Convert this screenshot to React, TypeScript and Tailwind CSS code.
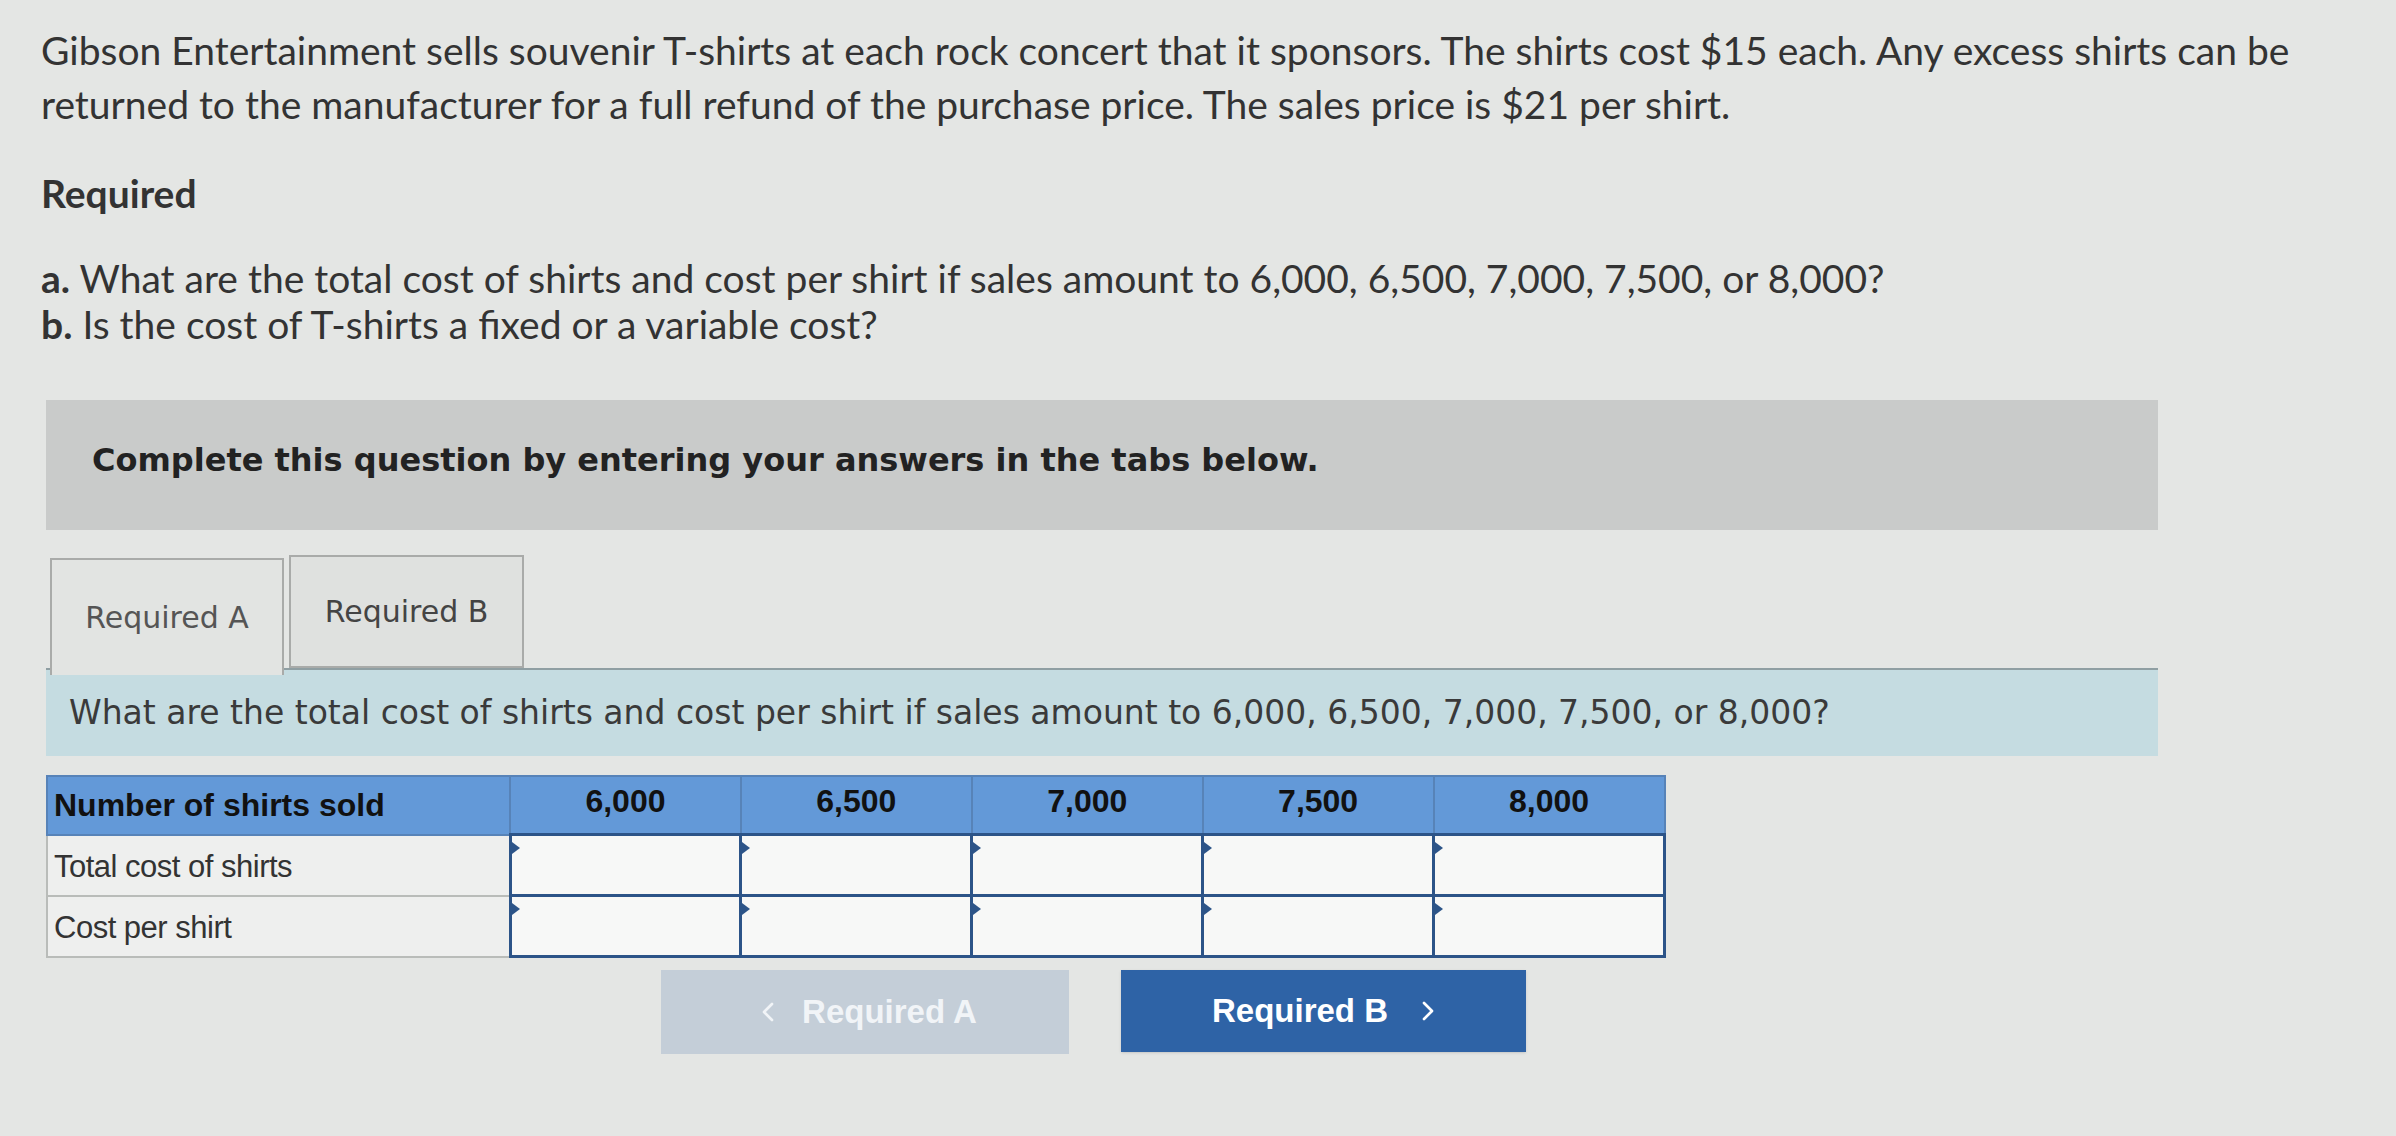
import React from 'react';
import { ChevronLeft, ChevronRight } from 'lucide-react';

const COUNTS = ['6,000', '6,500', '7,000', '7,500', '8,000'];
const ROWS = ['Total cost of shirts', 'Cost per shirt'];

const InputCell = () => (
  <td className="relative border-[3px] border-[#2c5488] bg-[#f7f8f7] p-0">
    <span className="absolute left-0 top-[6px] h-0 w-0 border-y-[6px] border-l-[8px] border-y-transparent border-l-[#2c5488]" />
    <div className="h-[58px]" />
  </td>
);

const App: React.FC = () => {
  return (
    <div className="min-h-[1136px] w-full bg-[#e4e6e4] pl-[41px] pt-[23px] text-[#333] [font-family:Lato,'Open_Sans',sans-serif]">
      <p className="w-[2330px] text-[39px] leading-[54px]">
        Gibson Entertainment sells souvenir T-shirts at each rock concert that it sponsors. The shirts cost $15 each. Any excess shirts can be returned to the manufacturer for a full refund of the purchase price. The sales price is $21 per shirt.
      </p>

      <h2 className="mt-[35px] text-[39px] font-bold leading-[54px]">Required</h2>

      <div className="mt-[35px] text-[39px] leading-[46px]">
        <p>
          <span className="font-bold">a.</span> What are the total cost of shirts and cost per shirt if sales amount to 6,000, 6,500, 7,000, 7,500, or 8,000?
        </p>
        <p>
          <span className="font-bold">b.</span> Is the cost of T-shirts a fixed or a variable cost?
        </p>
      </div>

      <div className="ml-[5px] w-[2112px] [font-family:'DejaVu_Sans',Verdana,sans-serif]">
        <div className="mt-[53px] h-[130px] bg-[#c9cbca] pl-[46px] pt-[36px]">
          <p className="text-[32px] font-bold text-[#222]">Complete this question by entering your answers in the tabs below.</p>
        </div>

        <div className="mt-[25px] flex items-end pl-[4px]">
          <div className="relative z-10 -mb-[7px] flex h-[117px] w-[234px] items-center justify-center border-2 border-b-0 border-[#a9aba9] bg-[#e2e4e2] text-[30px] text-[#555]">
            Required A
          </div>
          <div className="ml-[5px] flex h-[113px] w-[235px] items-center justify-center border-2 border-[#a9aba9] bg-[#dfe1df] text-[30px] text-[#444]">
            Required B
          </div>
        </div>

        <div className="flex h-[88px] items-center border-t-2 border-[#8f9fa3] bg-[#c5dce1] pl-[23px]">
          <p className="text-[33px] text-[#3a3a3a]">
            What are the total cost of shirts and cost per shirt if sales amount to 6,000, 6,500, 7,000, 7,500, or 8,000?
          </p>
        </div>

        <table className="mt-[19px] w-[1620px] border-collapse [font-family:'Liberation_Sans',Arial,sans-serif]">
          <thead>
            <tr className="h-[58px] bg-[#6399d8]">
              <th className="w-[463px] border-2 border-[#5783b8] pl-[6px] text-left text-[32px] font-bold text-[#111]">
                Number of shirts sold
              </th>
              {COUNTS.map(c => (
                <th key={c} className="border-2 border-[#5783b8] pb-[8px] text-center text-[32px] font-bold text-[#111]">
                  {c}
                </th>
              ))}
            </tr>
          </thead>
          <tbody>
            {ROWS.map(r => (
              <tr key={r}>
                <td className="border-2 border-[#b9bcb9] bg-[#eeefee] pl-[6px] pt-[4px] text-[31px] tracking-[-0.5px] text-[#333]">{r}</td>
                {COUNTS.map(c => (
                  <InputCell key={c} />
                ))}
              </tr>
            ))}
          </tbody>
        </table>

        <div className="mt-[12px] flex justify-center gap-[52px] pr-[18px] [font-family:'Liberation_Sans',Arial,sans-serif]">
          <button className="flex h-[84px] w-[408px] items-center justify-center gap-[18px] bg-[#c4ced8] text-[33px] font-bold text-[#f1f4f7]">
            <ChevronLeft size={32} strokeWidth={2} />
            <span>Required A</span>
          </button>
          <button className="flex h-[82px] w-[405px] items-center justify-center gap-[24px] bg-[#2e63a6] pl-[10px] text-[33px] font-bold text-white shadow-sm">
            <span>Required B</span>
            <ChevronRight size={32} strokeWidth={2} />
          </button>
        </div>
      </div>
    </div>
  );
};

export default App;
